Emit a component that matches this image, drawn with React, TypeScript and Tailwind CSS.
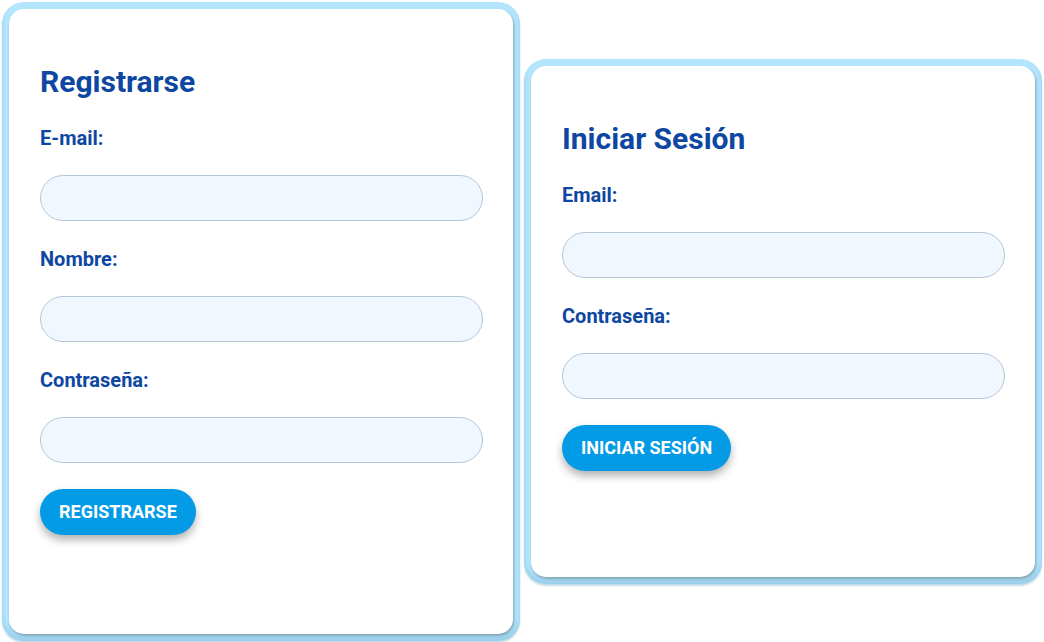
import { FormEvent } from 'react';

type Field = { id: string; label: string; type: string };

const registerFields: Field[] = [
  { id: 'reg-email', label: 'E-mail:', type: 'email' },
  { id: 'reg-name', label: 'Nombre:', type: 'text' },
  { id: 'reg-pass', label: 'Contraseña:', type: 'password' },
];

const loginFields: Field[] = [
  { id: 'login-email', label: 'Email:', type: 'email' },
  { id: 'login-pass', label: 'Contraseña:', type: 'password' },
];

function AuthCard({ title, fields, action, tall }: { title: string; fields: Field[]; action: string; tall?: boolean }) {
  const onSubmit = (e: FormEvent) => e.preventDefault();

  return (
    <div className="flex-1 m-[2px] rounded-[22px] bg-[#b3e5fc] p-[7px] shadow-[inset_0_-4px_4px_rgba(40,110,160,0.18),0_2px_2px_rgba(80,150,190,0.35)]">
      <form
        onSubmit={onSubmit}
        className={`bg-white rounded-[15px] pl-[31px] pr-[30px] pt-[55px] shadow-[1px_2px_3px_rgba(0,0,0,0.28)] ${
          tall ? 'pb-[99px]' : 'pb-[106px]'
        }`}
      >
        <h2 className="text-[30px] leading-[36px] font-bold text-[#0d47a1]">{title}</h2>
        {fields.map((f) => (
          <div key={f.id} className="mt-[24px]">
            <label htmlFor={f.id} className="block text-[20px] leading-[28px] font-bold text-[#0d47a1]">
              {f.label}
            </label>
            <input
              id={f.id}
              type={f.type}
              className="block w-full h-[46px] mt-[23px] rounded-full border border-[#b5c7d6] bg-[#f0f7fe] px-4 outline-none"
            />
          </div>
        ))}
        <button
          type="submit"
          className="mt-[26px] h-[46px] px-[19px] rounded-full bg-[#039be5] text-white text-[18px] font-bold uppercase shadow-[0_5px_8px_rgba(0,0,0,0.3)]"
        >
          {action}
        </button>
      </form>
    </div>
  );
}

export default function App() {
  return (
    <div className="h-[642px] w-[1044px] flex items-center bg-white font-['Roboto',sans-serif]">
      <AuthCard title="Registrarse" fields={registerFields} action="Registrarse" tall />
      <AuthCard title="Iniciar Sesión" fields={loginFields} action="Iniciar Sesión" />
    </div>
  );
}
